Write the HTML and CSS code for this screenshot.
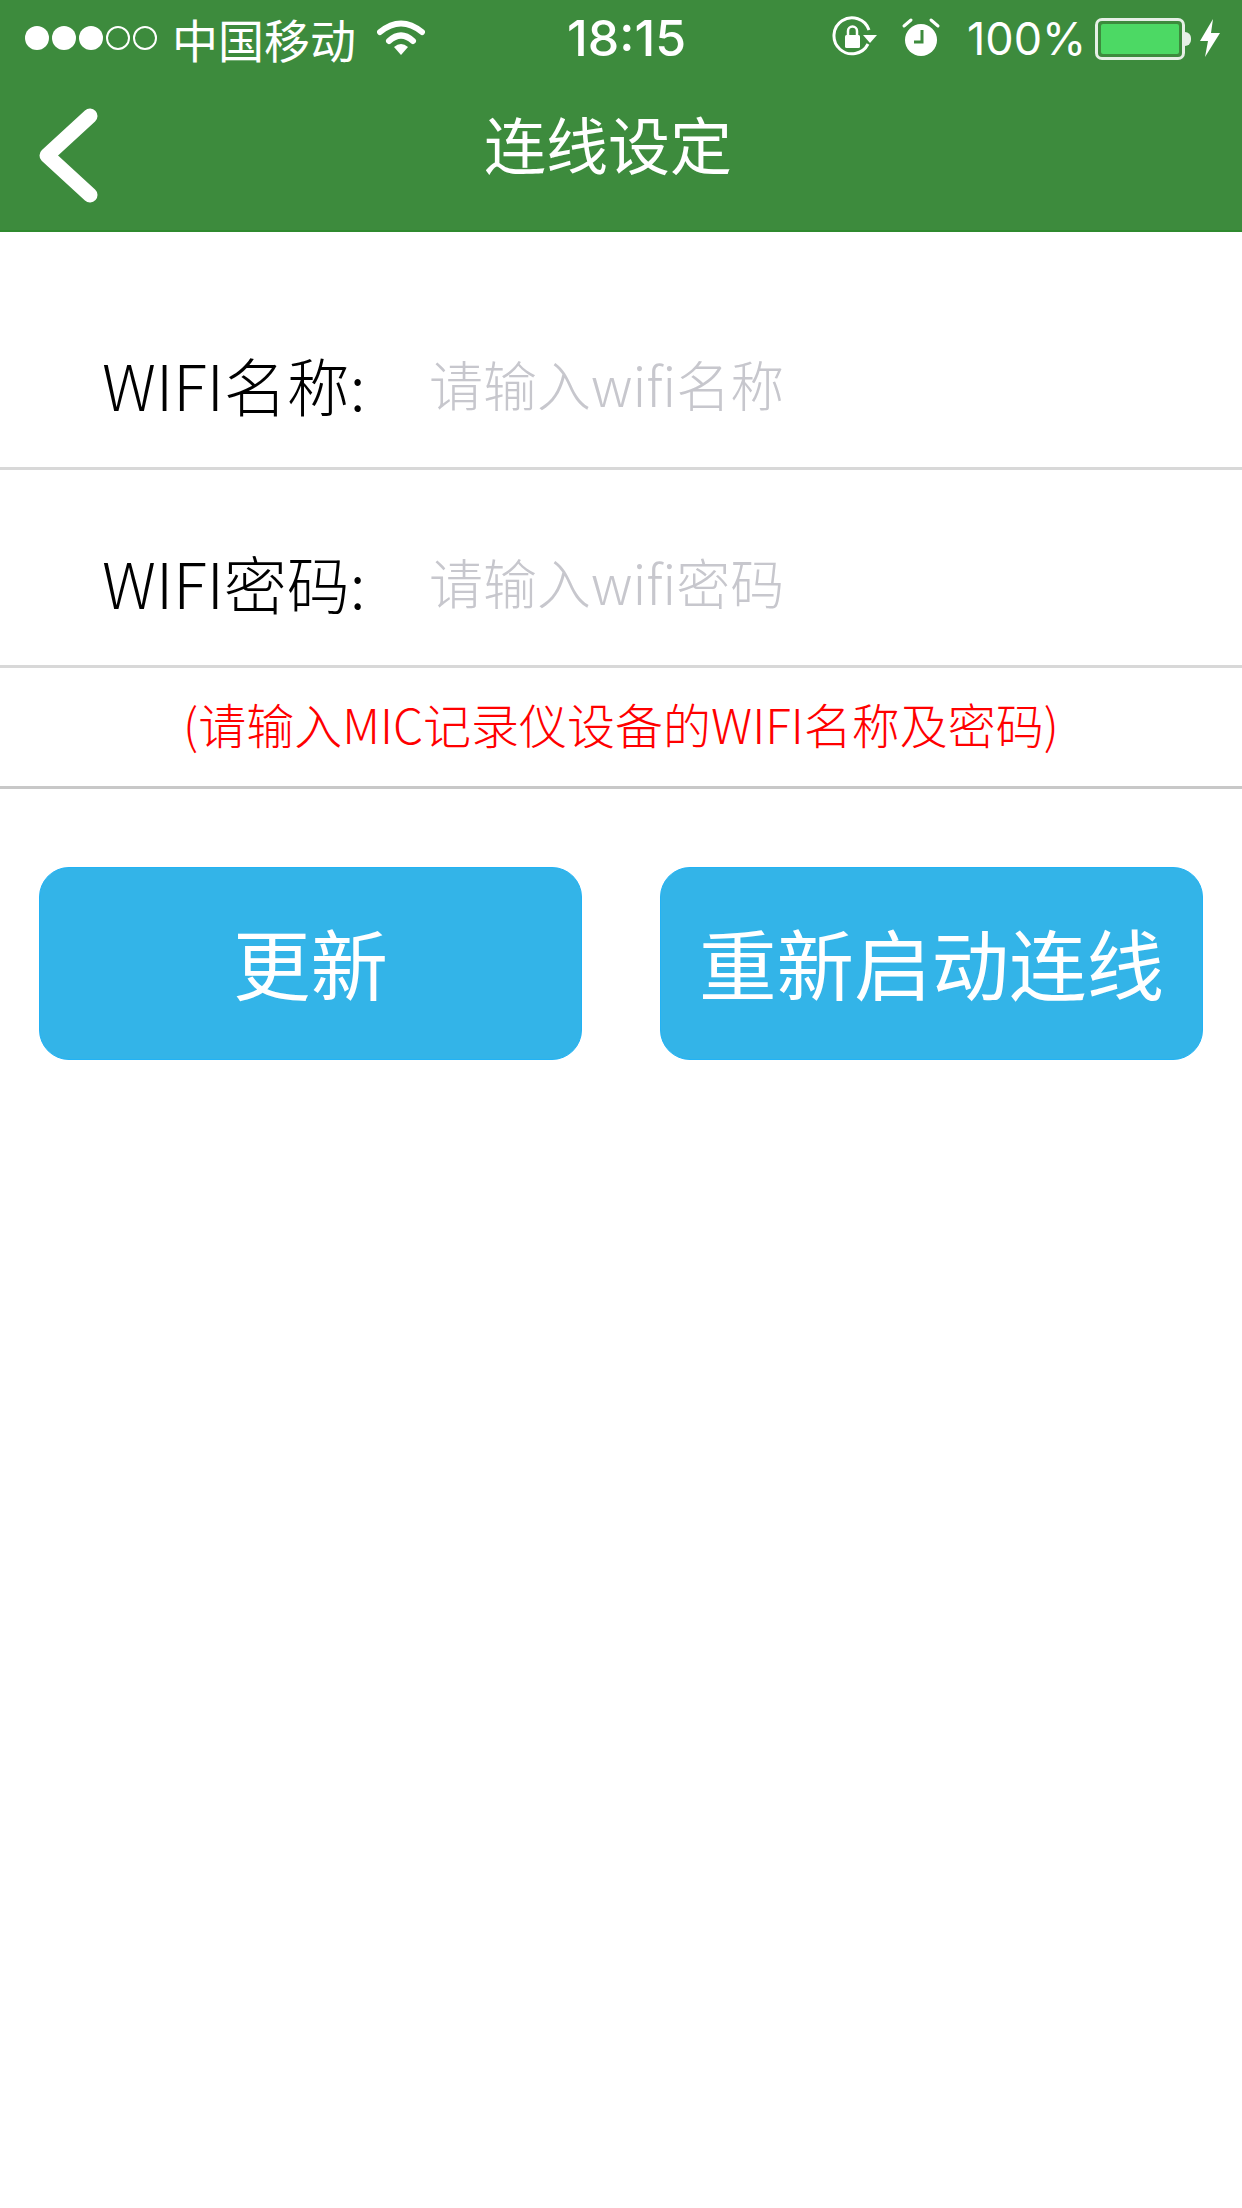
FILE: index.html
```html
<!DOCTYPE html>
<html lang="zh-CN">
<head>
    <meta charset="UTF-8">
    <title>连线设定</title>
    <link rel="stylesheet" href="styles.css">
</head>
<body>
<div class="header">
    <div class="statusBar">
        <div class="signal">
            <i class="dot"></i><i class="dot"></i><i class="dot"></i><i class="dot empty"></i><i class="dot empty"></i>
        </div>
        <span class="carrier">中国移动</span>
        <svg class="wifi" viewBox="0 0 48 36">
            <path d="M3 12 Q24 -5 45 12" fill="none" stroke="#fff" stroke-width="6" stroke-linecap="round"/>
            <path d="M12 21 Q24 10 36 21" fill="none" stroke="#fff" stroke-width="6" stroke-linecap="round"/>
            <path d="M17 27 Q24 21 31 27 L24 35 Z" fill="#fff"/>
        </svg>
        <span class="time">18:15</span>
        <svg class="rotLock" viewBox="0 0 46 46">
            <path d="M37 29 A18 18 0 1 1 38 15" fill="none" stroke="#fff" stroke-width="3"/>
            <path d="M32 20 L46 20 L39 28 Z" fill="#fff"/>
            <rect x="14" y="20" width="15" height="13" rx="1.5" fill="#fff"/>
            <path d="M17 21 V16 a4.500 4.500 0 0 1 9 0 V21" fill="none" stroke="#fff" stroke-width="2.500"/>
        </svg>
        <svg class="alarm" viewBox="0 0 40 42">
            <circle cx="20" cy="23" r="16" fill="#fff"/>
            <path d="M3 9 L10 3 M37 9 L30 3" stroke="#fff" stroke-width="3" stroke-linecap="round"/>
            <path d="M21 13 V25 H13" fill="none" stroke="#3d8b3d" stroke-width="3"/>
        </svg>
        <span class="percent">100%</span>
        <div class="battery"><div class="batteryFill"></div></div>
        <i class="batteryTip"></i>
        <svg class="bolt" viewBox="0 0 22 38">
            <path d="M14 0 L1 22 L9 22 L6 38 L21 14 L12 14 Z" fill="#fff"/>
        </svg>
    </div>
    <div class="nav">
        <svg class="back" viewBox="0 0 61 95">
            <path d="M52 8 L9 47.500 L52 87" fill="none" stroke="#fff" stroke-width="15" stroke-linecap="round" stroke-linejoin="round"/>
        </svg>
        <div class="title">连线设定</div>
    </div>
</div>
<div class="form">
    <div class="row first">
        <span class="label">WIFI名称:</span>
        <span class="hint">请输入wifi名称</span>
    </div>
    <div class="row">
        <span class="label">WIFI密码:</span>
        <span class="hint">请输入wifi密码</span>
    </div>
    <div class="note">(请输入MIC记录仪设备的WIFI名称及密码)</div>
</div>
<div class="buttons">
    <button class="btn">更新</button>
    <button class="btn">重新启动连线</button>
</div>
</body>
</html>
```

FILE: styles.css
```css
html, body {
    margin: 0;
    padding: 0;
    background-color: #fff;
}
body {
    width: 1242px;
    height: 2208px;
    overflow: hidden;
    font-family: "Noto Sans CJK SC", "Liberation Sans", sans-serif;
}
.header {
    height: 232px;
    background-color: #3d8b3d;
    border-bottom: 2px solid #2f8a2f;
    box-sizing: border-box;
    color: #fff;
}
.statusBar {
    height: 60px;
    padding: 16px 0 0 25px;
    box-sizing: border-box;
    display: flex;
    align-items: center;
}
.signal {
    display: flex;
    gap: 3px;
    width: 147px;
}
.dot {
    width: 24px;
    height: 24px;
    border-radius: 50%;
    background-color: #fff;
    box-sizing: border-box;
}
.dot.empty {
    background-color: transparent;
    border: 2px solid #fff;
}
.carrier {
    font-size: 46px;
    line-height: 52px;
    width: 205px;
}
.wifi {
    width: 48px;
    height: 36px;
    margin-right: 142px;
}
.time {
    font-family: "Inter", "Liberation Sans", sans-serif;
    font-weight: 500;
    font-size: 50px;
    width: 264px;
}
.rotLock {
    width: 46px;
    height: 46px;
    margin-right: 24px;
}
.alarm {
    width: 40px;
    height: 42px;
    margin-right: 26px;
}
.percent {
    font-family: "Inter", "Liberation Sans", sans-serif;
    font-size: 45px;
    font-weight: 400;
    width: 128px;
}
.battery {
    width: 90px;
    height: 42px;
    margin-top: 2px;
    border: 3px solid #e6efe6;
    border-radius: 7px;
    padding: 3px;
    box-sizing: border-box;
}
.batteryFill {
    height: 100%;
    background-color: #4cd964;
    border-radius: 2px;
}
.batteryTip {
    width: 6px;
    height: 14px;
    margin-top: 2px;
    background-color: #e6efe6;
    border-radius: 0 6px 6px 0;
    margin-right: 8px;
}
.bolt {
    width: 22px;
    height: 38px;
}
.nav {
    height: 170px;
    padding: 0 125px 0 38px;
    display: flex;
    align-items: center;
}
.back {
    width: 61px;
    height: 95px;
    flex: none;
    margin-top: 20px;
}
.title {
    flex: 1;
    text-align: center;
    font-size: 62px;
    font-weight: 400;
    margin-top: -4px;
}
.row {
    height: 198px;
    box-sizing: border-box;
    border-bottom: 3px solid #d8d8d8;
    padding: 28px 0 0 102px;
    display: flex;
    align-items: center;
    font-size: 54px;
    font-weight: 300;
}
.row.first {
    height: 238px;
    padding-top: 68px;
}
.label {
    width: 327px;
    color: #000;
    font-size: 63px;
}
.hint {
    color: #c7c7cd;
}
.note {
    height: 121px;
    box-sizing: border-box;
    border-bottom: 3px solid #c8c8c8;
    padding-bottom: 8px;
    display: flex;
    align-items: center;
    justify-content: center;
    color: #f00;
    font-size: 48px;
    font-weight: 300;
}
.buttons {
    padding: 78px 39px 0 39px;
    display: flex;
    justify-content: space-between;
}
.btn {
    width: 543px;
    height: 193px;
    border: 1px solid #22b2f5;
    border-radius: 30px;
    background-color: #33b4e8;
    color: #fff;
    font-family: inherit;
    font-size: 77.500px;
    font-weight: 400;
    padding: 0 0 6px;
}
```
